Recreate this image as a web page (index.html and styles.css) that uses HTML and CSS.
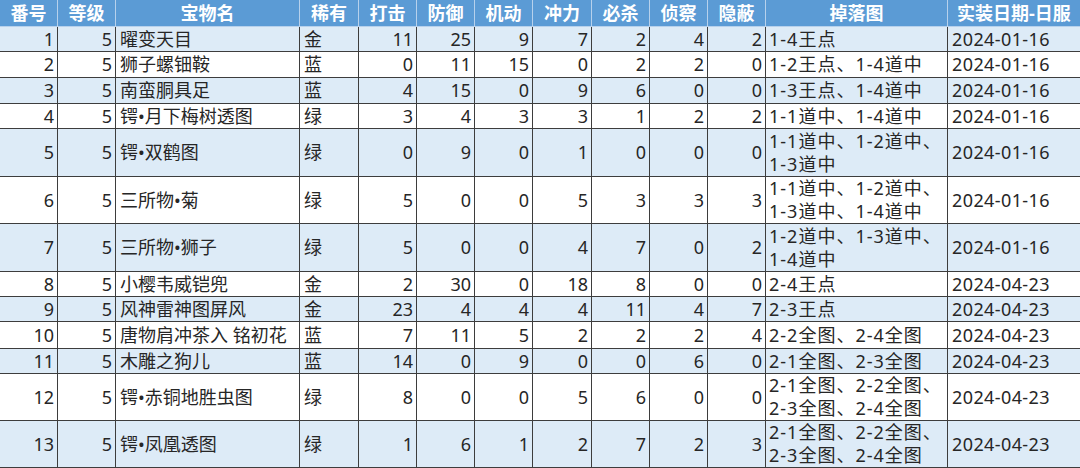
FILE: index.html
```html
<!DOCTYPE html>
<html lang="zh-CN">
<head>
<meta charset="utf-8">
<title>宝物表</title>
<link rel="stylesheet" href="styles.css">
</head>
<body>
<div class="sheet">
  <div class="c h">番号</div><div class="c h">等级</div><div class="c h">宝物名</div><div class="c h">稀有</div><div class="c h">打击</div><div class="c h">防御</div><div class="c h">机动</div><div class="c h">冲力</div><div class="c h">必杀</div><div class="c h">侦察</div><div class="c h">隐蔽</div><div class="c h">掉落图</div><div class="c h last">实装日期-日服</div>

  <div class="c n b">1</div><div class="c n b">5</div><div class="c t b">曜变天目</div><div class="c t b">金</div><div class="c n b">11</div><div class="c n b">25</div><div class="c n b">9</div><div class="c n b">7</div><div class="c n b">2</div><div class="c n b">4</div><div class="c n b">2</div><div class="c t drop b">1-4王点</div><div class="c t date b last">2024-01-16</div>

  <div class="c n">2</div><div class="c n">5</div><div class="c t">狮子螺钿鞍</div><div class="c t">蓝</div><div class="c n">0</div><div class="c n">11</div><div class="c n">15</div><div class="c n">0</div><div class="c n">2</div><div class="c n">2</div><div class="c n">0</div><div class="c t drop">1-2王点、1-4道中</div><div class="c t date last">2024-01-16</div>

  <div class="c n b">3</div><div class="c n b">5</div><div class="c t b">南蛮胴具足</div><div class="c t b">蓝</div><div class="c n b">4</div><div class="c n b">15</div><div class="c n b">0</div><div class="c n b">9</div><div class="c n b">6</div><div class="c n b">0</div><div class="c n b">0</div><div class="c t drop b">1-3王点、1-4道中</div><div class="c t date b last">2024-01-16</div>

  <div class="c n">4</div><div class="c n">5</div><div class="c t">锷•月下梅树透图</div><div class="c t">绿</div><div class="c n">3</div><div class="c n">4</div><div class="c n">3</div><div class="c n">3</div><div class="c n">1</div><div class="c n">2</div><div class="c n">2</div><div class="c t drop">1-1道中、1-4道中</div><div class="c t date last">2024-01-16</div>

  <div class="c n b">5</div><div class="c n b">5</div><div class="c t b">锷•双鹤图</div><div class="c t b">绿</div><div class="c n b">0</div><div class="c n b">9</div><div class="c n b">0</div><div class="c n b">1</div><div class="c n b">0</div><div class="c n b">0</div><div class="c n b">0</div><div class="c t drop b">1-1道中、1-2道中、<br>1-3道中</div><div class="c t date b last">2024-01-16</div>

  <div class="c n">6</div><div class="c n">5</div><div class="c t">三所物•菊</div><div class="c t">绿</div><div class="c n">5</div><div class="c n">0</div><div class="c n">0</div><div class="c n">5</div><div class="c n">3</div><div class="c n">3</div><div class="c n">3</div><div class="c t drop">1-1道中、1-2道中、<br>1-3道中、1-4道中</div><div class="c t date last">2024-01-16</div>

  <div class="c n b">7</div><div class="c n b">5</div><div class="c t b">三所物•狮子</div><div class="c t b">绿</div><div class="c n b">5</div><div class="c n b">0</div><div class="c n b">0</div><div class="c n b">4</div><div class="c n b">7</div><div class="c n b">0</div><div class="c n b">2</div><div class="c t drop b">1-2道中、1-3道中、<br>1-4道中</div><div class="c t date b last">2024-01-16</div>

  <div class="c n">8</div><div class="c n">5</div><div class="c t">小樱韦威铠兜</div><div class="c t">金</div><div class="c n">2</div><div class="c n">30</div><div class="c n">0</div><div class="c n">18</div><div class="c n">8</div><div class="c n">0</div><div class="c n">0</div><div class="c t drop">2-4王点</div><div class="c t date last">2024-04-23</div>

  <div class="c n b">9</div><div class="c n b">5</div><div class="c t b">风神雷神图屏风</div><div class="c t b">金</div><div class="c n b">23</div><div class="c n b">4</div><div class="c n b">4</div><div class="c n b">4</div><div class="c n b">11</div><div class="c n b">4</div><div class="c n b">7</div><div class="c t drop b">2-3王点</div><div class="c t date b last">2024-04-23</div>

  <div class="c n">10</div><div class="c n">5</div><div class="c t">唐物肩冲茶入 铭初花</div><div class="c t">蓝</div><div class="c n">7</div><div class="c n">11</div><div class="c n">5</div><div class="c n">2</div><div class="c n">2</div><div class="c n">2</div><div class="c n">4</div><div class="c t drop">2-2全图、2-4全图</div><div class="c t date last">2024-04-23</div>

  <div class="c n b">11</div><div class="c n b">5</div><div class="c t b">木雕之狗儿</div><div class="c t b">蓝</div><div class="c n b">14</div><div class="c n b">0</div><div class="c n b">9</div><div class="c n b">0</div><div class="c n b">0</div><div class="c n b">6</div><div class="c n b">0</div><div class="c t drop b">2-1全图、2-3全图</div><div class="c t date b last">2024-04-23</div>

  <div class="c n">12</div><div class="c n">5</div><div class="c t">锷•赤铜地胜虫图</div><div class="c t">绿</div><div class="c n">8</div><div class="c n">0</div><div class="c n">0</div><div class="c n">5</div><div class="c n">6</div><div class="c n">0</div><div class="c n">0</div><div class="c t drop">2-1全图、2-2全图、<br>2-3全图、2-4全图</div><div class="c t date last">2024-04-23</div>

  <div class="c n b">13</div><div class="c n b">5</div><div class="c t b">锷•凤凰透图</div><div class="c t b">绿</div><div class="c n b">1</div><div class="c n b">6</div><div class="c n b">1</div><div class="c n b">2</div><div class="c n b">7</div><div class="c n b">2</div><div class="c n b">3</div><div class="c t drop b">2-1全图、2-2全图、<br>2-3全图、2-4全图</div><div class="c t date b last">2024-04-23</div>
</div>
</body>
</html>
```
FILE: styles.css
```css
html, body {
  margin: 0;
  padding: 0;
  background: #ffffff;
}

.sheet {
  width: 1080px;
  height: 468px;
  display: grid;
  grid-template-columns: 58px 58px 184px 59px 58px 58px 58px 59px 58px 58px 58px 182px 132px;
  grid-template-rows: 27px 25px 26px 26px 25px 48px 47px 48px 25px 25px 27px 25px 47px 47px;
  font-family: "Noto Sans", "Noto Sans CJK SC", sans-serif;
  font-size: 18px;
  color: #262626;
  overflow: hidden;
}

.c {
  box-sizing: border-box;
  display: flex;
  align-items: center;
  border-right: 1px solid #3d3d3d;
  border-bottom: 1px solid #3d3d3d;
  line-height: 23px;
  white-space: nowrap;
  background: #ffffff;
}

.c.last {
  border-right: none;
}

.b {
  background: #ddebf7;
}

.h {
  background: #5b9bd5;
  color: #ffffff;
  font-weight: bold;
  justify-content: center;
  border-right: 1px solid #b7d1ec;
  border-bottom: 1px solid #b7d1ec;
}

.n {
  justify-content: flex-end;
  padding-right: 3px;
}

.t {
  justify-content: flex-start;
  padding-left: 4px;
}

.drop {
  padding-left: 3px;
  letter-spacing: 1px;
}

.date {
  letter-spacing: 0.4px;
}
```
